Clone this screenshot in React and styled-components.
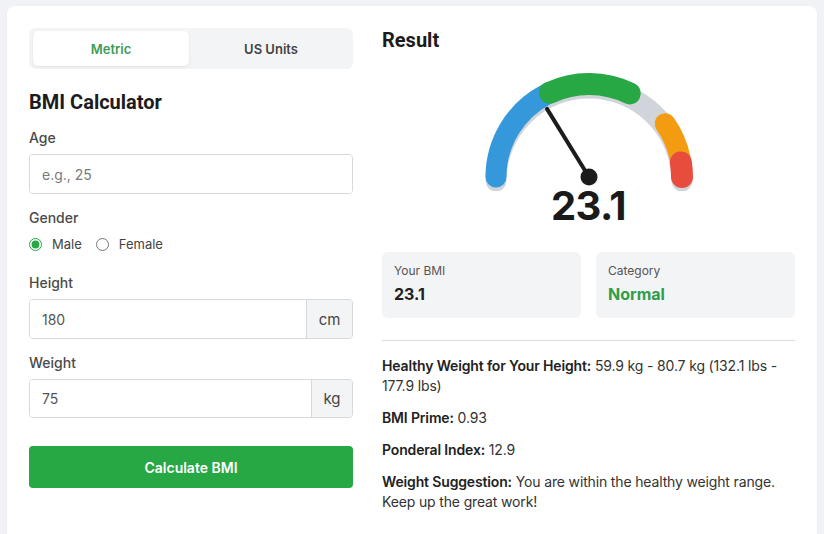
import React, { useState } from "react";
import styled, { createGlobalStyle } from "styled-components";

const GlobalStyle = createGlobalStyle`
  * { box-sizing: border-box; }
  html, body { margin: 0; padding: 0; }
  body {
    background: #f1f2f6;
    font-family: Inter, "Noto Sans", sans-serif;
    color: #222;
  }
`;

const Page = styled.div`
  padding: 6px 7px 0 7px;
  height: 534px;
  overflow: hidden;
`;

const Card = styled.div`
  background: #ffffff;
  border-radius: 8px;
  box-shadow: 0 1px 3px rgba(0, 0, 0, 0.04);
  padding: 22px 22px 40px 22px;
  width: 810px;
  min-height: 560px;
  display: grid;
  grid-template-columns: 324px 413px;
  column-gap: 29px;
  align-items: start;
`;

const Column = styled.div`
  display: flex;
  flex-direction: column;
`;

const Tabs = styled.div`
  display: flex;
  gap: 4px;
  background: #f3f4f6;
  border-radius: 6px;
  padding: 3px 4px;
  height: 41px;
  margin-bottom: 21px;
`;

const Tab = styled.button`
  flex: 1;
  border: none;
  border-radius: 5px;
  font-family: Inter, sans-serif;
  font-size: 13px;
  font-weight: 600;
  cursor: pointer;
  background: ${(p) => (p.$active ? "#ffffff" : "transparent")};
  color: ${(p) => (p.$active ? "#3c9c55" : "#444")};
  box-shadow: ${(p) => (p.$active ? "0 1px 3px rgba(0,0,0,0.08)" : "none")};
`;

const Heading = styled.h2`
  margin: 0 0 ${(p) => p.$mb || 0}px 0;
  font-family: Roboto, Inter, sans-serif;
  font-size: 20px;
  line-height: 24px;
  font-weight: 700;
  color: #1c1c1c;
`;

const Group = styled.div`
  display: flex;
  flex-direction: column;
  margin-bottom: ${(p) => (p.$mb !== undefined ? p.$mb : 13)}px;
`;

const Label = styled.label`
  font-size: 14px;
  line-height: 20px;
  font-weight: 500;
  color: #4a4a4a;
  margin-top: 1px;
  margin-bottom: 6px;
`;

const InputWrap = styled.div`
  display: flex;
  height: ${(p) => p.$h || 40}px;
  border: 1px solid #d6d8dc;
  border-radius: 4px;
  overflow: hidden;
`;

const TextInput = styled.input`
  flex: 1;
  min-width: 0;
  border: none;
  outline: none;
  padding: 0 12px;
  font-family: Inter, sans-serif;
  font-size: 14px;
  color: #555;
  background: #fff;
  &::placeholder { color: #7a7a7a; }
`;

const Addon = styled.span`
  display: flex;
  align-items: center;
  justify-content: center;
  width: ${(p) => p.$w}px;
  background: #f3f4f6;
  border-left: 1px solid #d6d8dc;
  font-size: 15px;
  color: #444;
`;

const RadioRow = styled.div`
  display: flex;
  align-items: center;
  height: 20px;
  margin-bottom: 5px;
  gap: 14px;
`;

const RadioLabel = styled.label`
  display: flex;
  align-items: center;
  gap: 10px;
  font-size: 13px;
  color: #444;
`;

const Radio = styled.input`
  margin: 0;
  width: 13px;
  height: 13px;
  accent-color: #28a745;
`;

const Button = styled.button`
  margin-top: 28px;
  height: 42px;
  border: none;
  border-radius: 4px;
  background: #28a745;
  color: #fff;
  font-family: Inter, sans-serif;
  font-size: 14px;
  font-weight: 600;
  cursor: pointer;
`;

const GaugeBox = styled.div`
  display: flex;
  flex-direction: column;
  align-items: center;
  margin-top: 14px;
`;

const GaugeSvg = styled.svg`
  display: block;
`;

const BigNumber = styled.div`
  margin-top: -5px;
  font-size: 40px;
  line-height: 40px;
  font-weight: 700;
  color: #1a1a1a;
  letter-spacing: -0.5px;
`;

const Stats = styled.div`
  display: grid;
  grid-template-columns: 1fr 1fr;
  gap: 15px;
  margin-top: 26px;
`;

const StatBox = styled.div`
  background: #f3f4f6;
  border-radius: 6px;
  padding: 11px 12px 14px 12px;
  height: 66px;
`;

const StatLabel = styled.div`
  font-size: 12px;
  line-height: 16px;
  color: #555;
  margin-bottom: 5px;
`;

const StatValue = styled.div`
  font-size: 16px;
  line-height: 20px;
  font-weight: 700;
  color: ${(p) => p.$color || "#222"};
`;

const Divider = styled.hr`
  border: none;
  border-top: 1px solid #dcdcdc;
  margin: 22px 0 15px 0;
`;

const Para = styled.p`
  margin: 0 0 12px 0;
  font-size: 14px;
  line-height: 20px;
  letter-spacing: -0.15px;
  color: #333;
  strong { font-weight: 600; color: #222; }
`;

const CX = 110;
const CY = 111;
const R = 93;

function pt(deg) {
  const a = (deg * Math.PI) / 180;
  return [CX + R * Math.cos(a), CY - R * Math.sin(a)];
}

function arc(from, to) {
  const [x1, y1] = pt(from);
  const [x2, y2] = pt(to);
  return `M ${x1.toFixed(2)} ${y1.toFixed(2)} A ${R} ${R} 0 0 1 ${x2.toFixed(2)} ${y2.toFixed(2)}`;
}

function Gauge({ value }) {
  const frac = Math.min(1, Math.max(0, (value - 15) / 25));
  const ang = 180 - frac * 180;
  const a = (ang * Math.PI) / 180;
  const nx = CX + 80 * Math.cos(a);
  const ny = CY - 80 * Math.sin(a);
  return (
    <GaugeSvg width="220" height="125" viewBox="0 0 220 125">
      <path d={arc(180, 0)} transform="translate(0,4)" fill="none" stroke="#d1d5db" strokeWidth="21" strokeLinecap="round" />
      <path d={arc(180, 118)} fill="none" stroke="#3498db" strokeWidth="21" strokeLinecap="round" />
      <path d={arc(115, 64)} fill="none" stroke="#28a745" strokeWidth="22" strokeLinecap="round" />
      <path d={arc(35, 12)} fill="none" stroke="#f39c12" strokeWidth="21" strokeLinecap="round" />
      <path d={arc(9, 0)} fill="none" stroke="#e74c3c" strokeWidth="22" strokeLinecap="round" />
      <line x1={CX} y1={CY} x2={nx} y2={ny} stroke="#1c1c1c" strokeWidth="4" strokeLinecap="round" />
      <circle cx={CX} cy={CY} r="8.5" fill="#1c1c1c" />
    </GaugeSvg>
  );
}

export default function App() {
  const [unit, setUnit] = useState("metric");
  const [gender, setGender] = useState("male");
  return (
    <>
      <GlobalStyle />
      <Page>
        <Card>
          <Column>
            <Tabs>
              <Tab $active={unit === "metric"} onClick={() => setUnit("metric")}>Metric</Tab>
              <Tab $active={unit === "us"} onClick={() => setUnit("us")}>US Units</Tab>
            </Tabs>
            <Heading $mb={13}>BMI Calculator</Heading>
            <Group>
              <Label>Age</Label>
              <InputWrap>
                <TextInput placeholder="e.g., 25" />
              </InputWrap>
            </Group>
            <Group>
              <Label>Gender</Label>
              <RadioRow>
                <RadioLabel>
                  <Radio type="radio" name="g" checked={gender === "male"} onChange={() => setGender("male")} />
                  Male
                </RadioLabel>
                <RadioLabel>
                  <Radio type="radio" name="g" checked={gender === "female"} onChange={() => setGender("female")} />
                  Female
                </RadioLabel>
              </RadioRow>
            </Group>
            <Group>
              <Label>Height</Label>
              <InputWrap>
                <TextInput defaultValue="180" />
                <Addon $w={46}>cm</Addon>
              </InputWrap>
            </Group>
            <Group $mb={0}>
              <Label>Weight</Label>
              <InputWrap $h={39}>
                <TextInput defaultValue="75" />
                <Addon $w={41}>kg</Addon>
              </InputWrap>
            </Group>
            <Button>Calculate BMI</Button>
          </Column>
          <Column>
            <Heading>Result</Heading>
            <GaugeBox>
              <Gauge value={23.1} />
              <BigNumber>23.1</BigNumber>
            </GaugeBox>
            <Stats>
              <StatBox>
                <StatLabel>Your BMI</StatLabel>
                <StatValue>23.1</StatValue>
              </StatBox>
              <StatBox>
                <StatLabel>Category</StatLabel>
                <StatValue $color="#2e9e48">Normal</StatValue>
              </StatBox>
            </Stats>
            <Divider />
            <Para><strong>Healthy Weight for Your Height:</strong> 59.9 kg - 80.7 kg (132.1 lbs - 177.9 lbs)</Para>
            <Para><strong>BMI Prime:</strong> 0.93</Para>
            <Para><strong>Ponderal Index:</strong> 12.9</Para>
            <Para><strong>Weight Suggestion:</strong> You are within the healthy weight range. Keep up the great work!</Para>
          </Column>
        </Card>
      </Page>
    </>
  );
}
